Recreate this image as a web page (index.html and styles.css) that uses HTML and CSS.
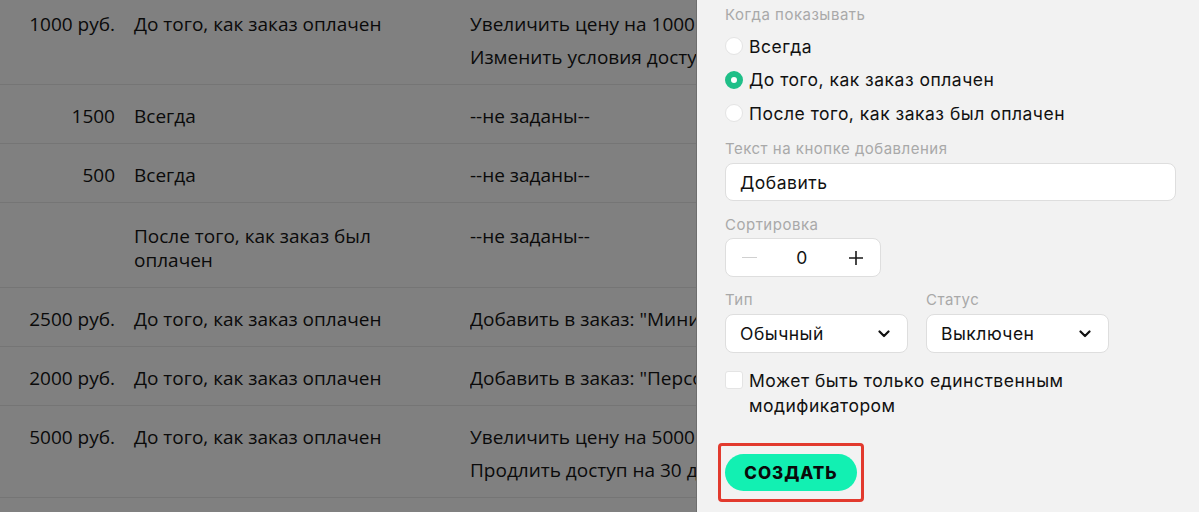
FILE: index.html
```html
<!DOCTYPE html>
<html lang="ru">
<head>
<meta charset="utf-8">
<title>Модификаторы</title>
<link rel="stylesheet" href="styles.css">
</head>
<body>
<div class="page">
  <div class="table">
    <div class="row first">
      <div class="c-price">1000 руб.</div>
      <div class="c-when">До того, как заказ оплачен</div>
      <div class="c-act">
        <div>Увеличить цену на 1000 руб.</div>
        <div>Изменить условия доступа</div>
      </div>
    </div>
    <div class="row">
      <div class="c-price">1500</div>
      <div class="c-when">Всегда</div>
      <div class="c-act"><div>--не заданы--</div></div>
    </div>
    <div class="row">
      <div class="c-price">500</div>
      <div class="c-when">Всегда</div>
      <div class="c-act"><div>--не заданы--</div></div>
    </div>
    <div class="row tall">
      <div class="c-price"></div>
      <div class="c-when">После того, как заказ был<br>оплачен</div>
      <div class="c-act"><div>--не заданы--</div></div>
    </div>
    <div class="row">
      <div class="c-price">2500 руб.</div>
      <div class="c-when">До того, как заказ оплачен</div>
      <div class="c-act"><div>Добавить в заказ: "Мини-курс"</div></div>
    </div>
    <div class="row">
      <div class="c-price">2000 руб.</div>
      <div class="c-when">До того, как заказ оплачен</div>
      <div class="c-act"><div>Добавить в заказ: "Персональная консультация"</div></div>
    </div>
    <div class="row">
      <div class="c-price">5000 руб.</div>
      <div class="c-when">До того, как заказ оплачен</div>
      <div class="c-act">
        <div>Увеличить цену на 5000 руб.</div>
        <div>Продлить доступ на 30 дней</div>
      </div>
    </div>
  </div>

  <div class="panel">
    <div class="label">Когда показывать</div>
    <div class="radios">
      <div class="radio"><span class="dot"></span><span>Всегда</span></div>
      <div class="radio"><span class="dot on"></span><span>До того, как заказ оплачен</span></div>
      <div class="radio"><span class="dot"></span><span>После того, как заказ был оплачен</span></div>
    </div>

    <div class="group">
      <div class="label">Текст на кнопке добавления</div>
      <div class="input">Добавить</div>
    </div>

    <div class="group">
      <div class="label">Сортировка</div>
      <div class="stepper">
        <span class="minus"></span>
        <span class="num">0</span>
        <svg class="plus" width="14" height="14" viewBox="0 0 14 14"><path d="M7 0v14M0 7h14" stroke="#1a1a1a" stroke-width="1.6"/></svg>
      </div>
    </div>

    <div class="group pair">
      <div class="col">
        <div class="label">Тип</div>
        <div class="select"><span>Обычный</span>
          <svg class="chev" width="12" height="8" viewBox="0 0 12 8"><path d="M1.5 1.5l4.5 4.5 4.5-4.5" fill="none" stroke="#111" stroke-width="2.2" stroke-linecap="round" stroke-linejoin="round"/></svg>
        </div>
      </div>
      <div class="col">
        <div class="label">Статус</div>
        <div class="select"><span>Выключен</span>
          <svg class="chev" width="12" height="8" viewBox="0 0 12 8"><path d="M1.5 1.5l4.5 4.5 4.5-4.5" fill="none" stroke="#111" stroke-width="2.2" stroke-linecap="round" stroke-linejoin="round"/></svg>
        </div>
      </div>
    </div>

    <div class="check"><span class="box"></span><span class="check-text">Может быть только единственным модификатором</span></div>

    <div class="highlight">
      <button class="btn">СОЗДАТЬ</button>
    </div>
  </div>
</div>
</body>
</html>
```

FILE: styles.css
```css
* { box-sizing: border-box; }
html, body { margin: 0; padding: 0; }
body {
  width: 1199px;
  height: 512px;
  overflow: hidden;
  background: #808080;
}
.page {
  display: flex;
  height: 512px;
}
.table {
  flex: 0 0 696px;
  overflow: hidden;
  background: #808080;
  font-family: "Open Sans", "Noto Sans", sans-serif;
  font-size: 19px;
  color: #0a0a0a;
}
.row {
  display: grid;
  grid-template-columns: 115px 317px 1fr;
  column-gap: 19px;
  padding: 19px 0 15px;
  border-bottom: 1px solid #757575;
  line-height: 24px;
}
.row.first { margin-top: -7px; }
.row.tall { padding-top: 21px; }
.c-price { text-align: right; white-space: nowrap; }
.c-act {
  display: flex;
  flex-direction: column;
  gap: 9px;
  white-space: nowrap;
  overflow: hidden;
}

.panel {
  flex: 1;
  background: #f2f2f2;
  border-left: 1px solid #6e6e6e;
  padding: 5px 23px 0 28px;
  font-family: "Inter", "Noto Sans", sans-serif;
  font-size: 17.5px;
  letter-spacing: 0.5px;
  color: #111;
}
.label {
  font-size: 15px;
  line-height: 20px;
  letter-spacing: 0.5px;
  color: #a9a9a9;
}
.radios {
  display: flex;
  flex-direction: column;
  gap: 9.5px;
  margin-top: 9px;
}
.radio {
  display: flex;
  align-items: center;
  gap: 6px;
  height: 24px;
}
.dot {
  width: 18px;
  height: 18px;
  border-radius: 50%;
  background: #fff;
  border: 1px solid #e4e4e4;
  flex: none;
}
.dot.on {
  background: #fff;
  border: 6px solid #1fbf88;
}
.group { margin-top: 14px; }
.group .label { margin-bottom: 4px; }
.input {
  height: 38px;
  background: #fff;
  border: 1px solid #dedede;
  border-radius: 8px;
  padding: 0 14px;
  display: flex;
  align-items: center;
}
.stepper {
  width: 156px;
  height: 39px;
  background: #fff;
  border: 1px solid #dedede;
  border-radius: 8px;
  display: flex;
  align-items: center;
  justify-content: space-between;
  padding: 0 17px 0 16px;
  margin-top: -1px;
}
.minus {
  width: 15px;
  height: 1.5px;
  background: #d0d0d0;
}
.num { margin-left: -2px; }
.pair {
  display: flex;
  gap: 18px;
  margin-top: 13px;
}
.pair .col { width: 183px; }
.select {
  height: 39px;
  background: #fff;
  border: 1px solid #dedede;
  border-radius: 8px;
  padding: 0 17px 0 14px;
  display: flex;
  align-items: center;
  justify-content: space-between;
}
.check {
  display: flex;
  align-items: flex-start;
  gap: 6px;
  margin-top: 15px;
  line-height: 25px;
  width: 360px;
}
.box {
  width: 18px;
  height: 18px;
  margin-top: 3px;
  background: #fff;
  border: 1px solid #e4e4e4;
  border-radius: 3px;
  flex: none;
}
.highlight {
  display: inline-block;
  margin: 25px 0 0 -7px;
  padding: 8px 4px;
  border: 3px solid #e23a2e;
  border-radius: 4px;
}
.btn {
  display: block;
  width: 132px;
  height: 37px;
  border: 0;
  border-radius: 19px;
  background: #12f0b2;
  color: #0a0a0a;
  font-family: "Inter", "Noto Sans", sans-serif;
  font-weight: 800;
  font-size: 17px;
  letter-spacing: 1px;
  padding: 0;
}
```
